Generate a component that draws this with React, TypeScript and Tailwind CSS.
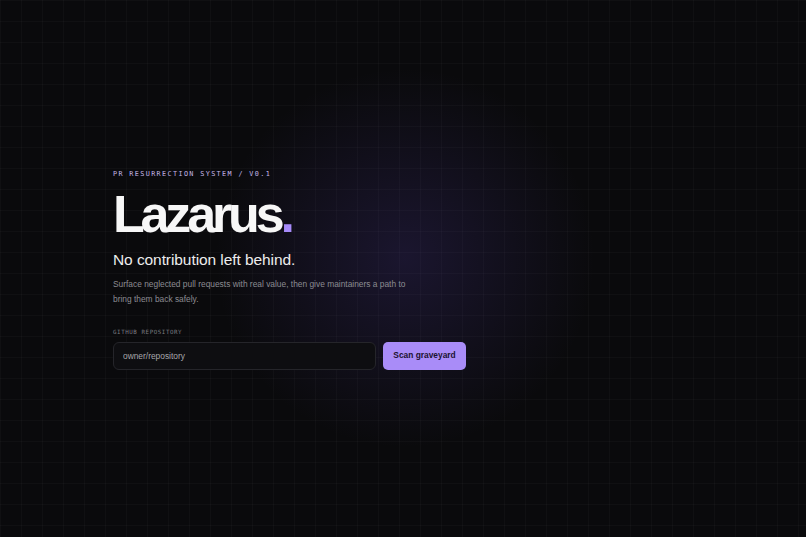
export default function App() {
  return (
    <div className="min-h-screen w-full bg-[#0a0a0c] bg-[image:radial-gradient(circle_at_405px_258px,rgba(98,72,196,0.19),transparent_190px),linear-gradient(to_right,rgba(255,255,255,0.025)_1px,transparent_1px),linear-gradient(to_bottom,rgba(255,255,255,0.025)_1px,transparent_1px)] bg-[size:100%_100%,21px_21px,21px_21px] flex items-center font-['Liberation_Sans',Arial,sans-serif]">
      <main className="w-full max-w-[580px] mx-auto flex flex-col pt-[1px]">
        {/* Eyebrow */}
        <p className="font-['DejaVu_Sans_Mono','Liberation_Mono',monospace] text-[6.8px] leading-[10px] tracking-[0.2em] text-[#c2b6e6] uppercase">
          PR Resurrection System / v0.1
        </p>

        <h1 className="mt-[9px] text-[52px] leading-none font-bold tracking-[-0.08em] text-[#f7f7f7]">
          Lazarus<span className="text-[#a78bfa]">.</span>
        </h1>

        <h2 className="mt-[10px] text-[15.5px] leading-[20px] tracking-[-0.005em] text-[#ededed]">
          No contribution left behind.
        </h2>

        <p className="mt-[7px] max-w-[300px] text-[8.4px] leading-[15px] text-[#8c8c92]">
          Surface neglected pull requests with real value, then give maintainers a path to bring them back safely.
        </p>

        <label className="mt-[21px] font-['DejaVu_Sans_Mono','Liberation_Mono',monospace] text-[5.8px] leading-[8px] tracking-[0.1em] text-[#7a7a80] uppercase">
          GitHub Repository
        </label>

        <form className="mt-[6px] flex gap-[7px]" onSubmit={(e) => e.preventDefault()}>
          <input
            type="text"
            placeholder="owner/repository"
            className="w-[263px] h-[28px] px-[9px] rounded-[6px] border border-[#25252a] bg-[#0e0e11] text-[8.4px] text-[#d4d4d4] placeholder:text-[#a6a6aa] outline-none"
          />
          <button
            type="submit"
            className="w-[83px] h-[28px] rounded-[5px] bg-[#a98cf8] text-[8.4px] font-bold text-[#1b1230]"
          >
            Scan graveyard
          </button>
        </form>
      </main>
    </div>
  );
}
